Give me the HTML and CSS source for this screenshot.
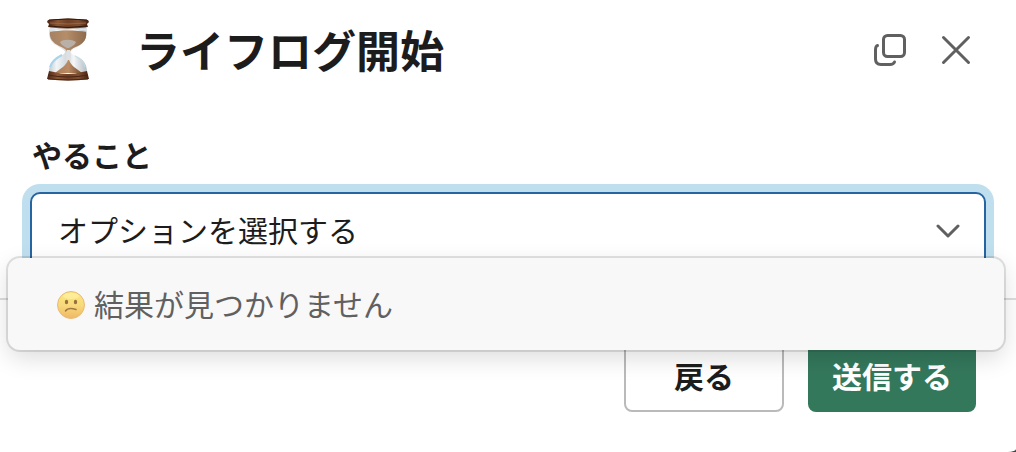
FILE: index.html
```html
<!DOCTYPE html>
<html lang="ja">
<head>
<meta charset="utf-8">
<title>ライフログ開始</title>
<meta name="viewport" content="width=device-width, initial-scale=1">
<link rel="stylesheet" href="styles.css">
</head>
<body>
<main class="modal">
  <header class="modal-header">
    <svg class="app-icon" viewBox="0 0 44 64" aria-hidden="true">
      <defs>
        <linearGradient id="wood" x1="0" x2="1" y1="0" y2="0">
          <stop offset="0" stop-color="#4a2413"/><stop offset=".25" stop-color="#8a5636"/>
          <stop offset=".5" stop-color="#6f4026"/><stop offset=".75" stop-color="#7f4f31"/><stop offset="1" stop-color="#43200f"/>
        </linearGradient>
        <linearGradient id="sand" x1="0" x2="1" y1="0" y2="0">
          <stop offset="0" stop-color="#a58263"/><stop offset=".45" stop-color="#b58d69"/><stop offset="1" stop-color="#8f6b4c"/>
        </linearGradient>
        <linearGradient id="heap" x1="0" x2="1" y1="0" y2="0">
          <stop offset="0" stop-color="#a87b55"/><stop offset=".5" stop-color="#b98c65"/><stop offset="1" stop-color="#75492d"/>
        </linearGradient>
        <linearGradient id="glass" x1="0" x2="1" y1="0" y2="0">
          <stop offset="0" stop-color="#c3ccd1"/><stop offset=".2" stop-color="#f1f5f7"/>
          <stop offset=".45" stop-color="#d5dadd"/><stop offset=".65" stop-color="#f4f6f7"/><stop offset="1" stop-color="#b4bcc1"/>
        </linearGradient>
      </defs>
      <path d="M4 9h36c2 9-1 15-7 19-5 3-8 4-8 6s3 3 6 4c6 3 10 8 10 16H3c0-8 4-13 10-16 3-1 6-2 6-4s-3-3-8-6C4 24 2 18 4 9z" fill="url(#glass)"/>
      <path d="M4 14c9-2 27-2 36 0 1 7-2 11-8 14-5 2-8 4-8 6v9h-3v-9c0-2-3-4-8-6C7 25 3 20 4 14z" fill="url(#sand)"/>
      <path d="M14 24c3-3 12-3 16 0-1 3-4 4-7 6h-2c-3-2-6-3-7-6z" fill="#b9b5b0" opacity=".9"/>
      <path d="M21 32h3l1 6-1 8h-3l-1-8z" fill="#dde1e3"/>
      <path d="M4 49c2-6 6-9 12-12" fill="none" stroke="#a9d4eb" stroke-width="2"/>
      <path d="M29 38c5 3 9 6 10 11" fill="none" stroke="#bddff0" stroke-width="1"/>
      <path d="M22 42h1c2 6 7 8 13 13H9c6-5 11-7 13-13z" fill="url(#heap)"/>
      <path d="M4 10c8 2 29 2 37 0v3c-8-2-29-2-37 0z" fill="#dfe5e8"/>
      <path d="M2 2q20-3 40 0l1 2-2 2 1 3q-20 3-40 0l1-3-2-2z" fill="url(#wood)"/>
      <path d="M3 2q19-2 38 0M3 8q19 3 38 0" fill="none" stroke="#32170b" stroke-width="1"/>
      <path d="M4 5q18 2 36 0" fill="none" stroke="#9a6541" stroke-width="1"/>
      <path d="M3 53l5 1q14 4 28 0l5-1 1 4 1 4q-21 3-42 0l1-4z" fill="url(#wood)"/>
      <path d="M2 57q20 4 40 0M2 61q20 2 40 0" fill="none" stroke="#4a2613" stroke-width="1"/>
    </svg>
    <h1 class="modal-title">ライフログ開始</h1>
    <button class="icon-button" type="button" aria-label="新しいウィンドウで開く">
      <svg class="icon" viewBox="0 0 34 34" aria-hidden="true"><rect x="10.500" y="2.500" width="21" height="21" rx="4"/><path d="M4.500 12.500Q2.500 13 2.500 17v9q0 5.500 5.500 5.500h9q3.500 0 4.500-2.500"/></svg>
    </button>
    <button class="icon-button" type="button" aria-label="閉じる">
      <svg class="icon" viewBox="0 0 34 34" aria-hidden="true"><path d="M4.500 4.500l25 25M29.500 4.500l-25 25"/></svg>
    </button>
  </header>
  <form class="modal-form">
    <div class="modal-body">
      <label class="field-label" for="task">やること</label>
      <div class="field">
        <select class="select" id="task"><option>オプションを選択する</option></select>
        <svg class="chevron" viewBox="0 0 24 14" aria-hidden="true"><path d="M2 2l10 10L22 2"/></svg>
        <div class="menu" role="status">
          <svg class="face" viewBox="0 0 28 28" aria-hidden="true">
            <defs>
              <linearGradient id="skin" x1="0" x2="0" y1="0" y2="1">
                <stop offset="0" stop-color="#fbe87e"/><stop offset=".5" stop-color="#f8da7c"/><stop offset="1" stop-color="#eeb864"/>
              </linearGradient>
            </defs>
            <circle cx="14" cy="14" r="13.500" fill="url(#skin)" stroke="#ebb977"/>
            <ellipse cx="14" cy="5" rx="8" ry="3" fill="#fff4a8" opacity=".6"/>
            <ellipse cx="9.500" cy="11" rx="1.700" ry="2.200" fill="#97703f"/>
            <ellipse cx="18.500" cy="11" rx="1.700" ry="2.200" fill="#97703f"/>
            <path d="M8.500 20c2-3 6-3 10.500-1.500" fill="none" stroke="#a37843" stroke-width="1.500" stroke-linecap="round"/>
          </svg>
          <span>結果が見つかりません</span>
        </div>
      </div>
    </div>
    <footer class="modal-footer">
      <button class="button button-back" type="button">戻る</button>
      <button class="button button-submit" type="submit">送信する</button>
    </footer>
  </form>
</main>
</body>
</html>
```
FILE: styles.css
```css
* {
  box-sizing: border-box;
}

body {
  margin: 0;
  background: #444;
  color: #1d1c1d;
  font-family: "Noto Sans CJK JP", sans-serif;
  font-size: 30px;
  line-height: 40px;
}

.modal {
  overflow: hidden;
  background: #fff;
  border-bottom-right-radius: 8px 3px;
}

.modal-header {
  display: flex;
  align-items: center;
  gap: 32px;
  padding: 18px 43px 18px 46px;
}

.app-icon {
  flex: none;
  width: 44px;
  height: 64px;
}

.modal-title {
  flex: 1;
  margin: 0 0 0 14px;
  font-size: 44px;
  line-height: 62px;
  padding-bottom: 2px;
  font-weight: 700;
}

.icon-button {
  display: flex;
  padding: 0;
  border: 0;
  background: none;
  color: #616061;
}

.icon {
  width: 34px;
  height: 34px;
  fill: none;
  stroke: currentColor;
  stroke-width: 3;
  stroke-linecap: round;
}

.modal-body {
  padding: 34px 30px 30px;
}

.field-label {
  display: block;
  margin: 0 2px 18px;
  font-weight: 700;
}

.field {
  position: relative;
}

.select {
  display: block;
  width: 100%;
  height: 76px;
  padding: 0 72px 2px 26px;
  appearance: none;
  border: 2px solid #2664a2;
  border-radius: 10px;
  outline: 0;
  background: #fff;
  box-shadow: 0 0 0 8px #c0dfee;
  color: inherit;
  font: inherit;
}

.chevron {
  position: absolute;
  top: 32px;
  right: 26px;
  width: 24px;
  height: 14px;
  fill: none;
  stroke: #616061;
  stroke-width: 3;
  stroke-linecap: round;
  stroke-linejoin: round;
  pointer-events: none;
}

.menu {
  position: absolute;
  z-index: 1;
  top: 66px;
  left: -22px;
  right: -18px;
  display: flex;
  align-items: center;
  gap: 8px;
  padding: 25px 48px 27px;
  border-radius: 12px;
  background: #f8f8f8;
  box-shadow: 0 0 0 2px rgba(29, 28, 29, 0.13), 0 8px 24px rgba(0, 0, 0, 0.14);
  color: #616061;
}

.face {
  flex: none;
  width: 30px;
  height: 28px;
  margin-top: 4px;
}

.modal-footer {
  display: flex;
  justify-content: flex-end;
  gap: 24px;
  padding: 40px;
  border-top: 2px solid #dddddd;
}

.button {
  height: 72px;
  padding: 0 24px 2px;
  border: 0;
  border-radius: 8px;
  font: inherit;
  font-weight: 700;
}

.button-back {
  min-width: 160px;
  border: 2px solid #bbbabb;
  background: #fff;
  color: #1d1c1d;
}

.button-submit {
  background: #34785c;
  color: #fff;
}
```
